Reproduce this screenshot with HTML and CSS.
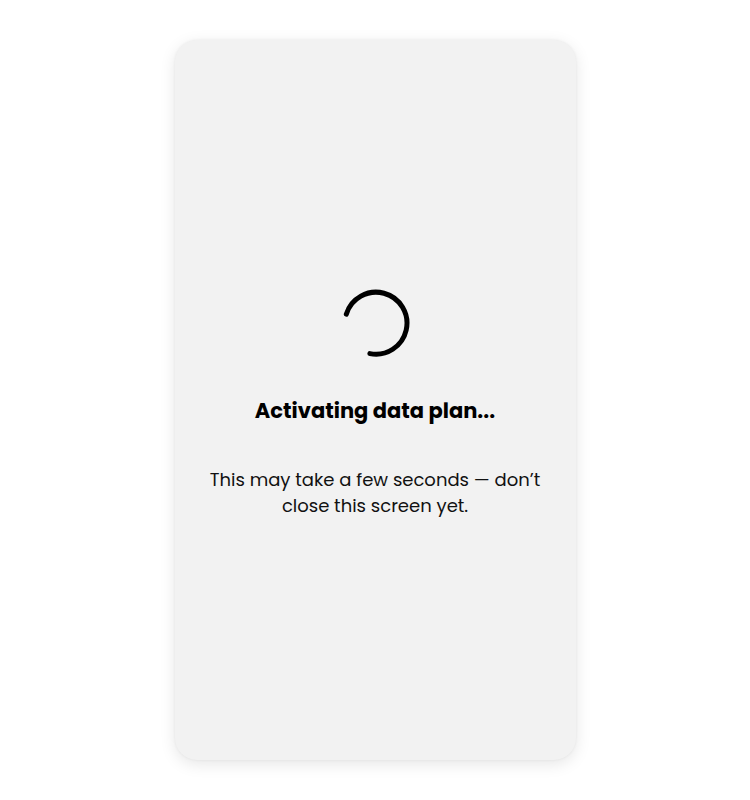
FILE: index.html
```html
<!DOCTYPE html>
<html lang="en">
<head>
<meta charset="utf-8">
<title>Activating data plan</title>
<link rel="stylesheet" href="styles.css">
</head>
<body>
<main class="stage">
  <section class="card">
    <div class="content">
      <svg class="spinner" width="70" height="70" viewBox="0 0 70 70" aria-hidden="true">
        <path d="M6.3 26.2 A31 31 0 1 1 29.9 65.6" fill="none" stroke="#000" stroke-width="5" stroke-linecap="round"/>
      </svg>
      <h1 class="title">Activating data plan...</h1>
      <p class="message">This may take a few seconds — don’t close this screen yet.</p>
    </div>
  </section>
</main>
</body>
</html>
```

FILE: styles.css
```css
html, body {
  margin: 0;
  padding: 0;
  background: #ffffff;
}
body {
  font-family: "Poppins", "Inter", "Noto Sans", sans-serif;
  color: #111;
}
.stage {
  width: 750px;
  height: 800px;
  display: flex;
  justify-content: center;
  padding-top: 40px;
  box-sizing: border-box;
}
.card {
  width: 401px;
  height: 720px;
  background: #f2f2f2;
  border-radius: 22px;
  box-shadow: 0 4px 16px rgba(0, 0, 0, 0.10), 0 0 3px rgba(0, 0, 0, 0.06);
  display: flex;
  align-items: center;
  justify-content: center;
}
.content {
  display: flex;
  flex-direction: column;
  align-items: center;
  text-align: center;
  margin-top: 6px;
}
.spinner {
  display: block;
}
.title {
  margin: 39px 0 0;
  font-size: 21px;
  line-height: 28px;
  font-weight: 700;
  color: #000;
}
.message {
  margin: 42px 0 0;
  width: 360px;
  font-size: 18px;
  line-height: 26px;
  font-weight: 400;
  color: #111;
}
```
